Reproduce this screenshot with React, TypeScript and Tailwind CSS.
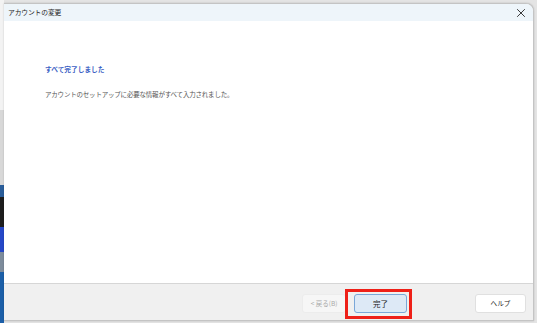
import React from "react";

export default function App() {
  const font = { fontFamily: '"Noto Sans CJK JP", "Noto Sans", sans-serif' };
  return (
    <div
      className="w-[537px] h-[323px] overflow-hidden bg-[#e4e4e4] flex"
      style={font}
    >
      {/* left backdrop strip */}
      <div className="w-[4px] flex flex-col shrink-0">
        <div className="h-[110px] bg-[#f3f3f3]" />
        <div className="h-[75px] bg-[#d8d8d8]" />
        <div className="h-[12px] bg-[#2a5d9a]" />
        <div className="h-[30px] bg-[#1e1e1e]" />
        <div className="h-[25px] bg-[#2648c8]" />
        <div className="h-[20px] bg-[#7d8c9c]" />
        <div className="flex-1 bg-[#1c5fa8]" />
      </div>
      <div className="flex-1 flex flex-col pt-[3px]">
        <div className="h-[318px] mr-[3px] flex flex-col bg-white rounded-tr-[8px] border border-[#c4c4c4] border-l-0 overflow-hidden shadow-[0_0_2px_rgba(0,0,0,0.2)]">
          {/* title bar */}
          <div className="h-[17px] bg-[#eef5fa] flex items-center justify-between pl-[4px] pr-[7px] shrink-0">
            <span className="text-[6.8px] tracking-[-0.15px] text-[#1f1f1f] leading-none">アカウントの変更</span>
            <svg width="10" height="10" viewBox="0 0 10 10">
              <path d="M1.2 1.2 L8.8 8.8 M8.8 1.2 L1.2 8.8" stroke="#3a3a3a" strokeWidth="1" />
            </svg>
          </div>
          {/* body */}
          <div className="flex-1 bg-white pl-[41px] pt-[43px]">
            <div className="text-[6.7px] font-bold text-[#3c5fc4] leading-[10px]">
              すべて完了しました
            </div>
            <div className="mt-[15px] text-[6.5px] tracking-[-0.2px] text-[#555] leading-[10px]">
              アカウントのセットアップに必要な情報がすべて入力されました。
            </div>
          </div>
          {/* footer */}
          <div className="h-[37px] bg-[#f0f0f0] border-t border-[#d6d6d6] shrink-0 flex items-start pt-[10px] pr-[7px]">
            <div className="flex-1" />
            <div className="w-[44px] h-[19px] bg-[#f6f6f6] border border-[#ececec] rounded-[3px] flex items-center justify-center text-[6.5px] text-[#a8a8a8]">
              &lt; 戻る(B)
            </div>
            <div className="relative ml-[8px]">
              <div className="w-[53px] h-[19px] bg-[#dde9f6] border border-[#7aa7d8] rounded-[3px] flex items-center justify-center text-[7.5px] text-[#222]">
                完了
              </div>
              <div className="absolute left-[-9px] right-[-5px] top-[-5px] bottom-[-6px] border-[3px] border-[#ee2018]" />
            </div>
            <div className="ml-[68px] w-[51px] h-[19px] bg-white border border-[#e0e0e0] rounded-[3px] flex items-center justify-center text-[6.6px] text-[#222]">
              ヘルプ
            </div>
          </div>
        </div>
      </div>
    </div>
  );
}
